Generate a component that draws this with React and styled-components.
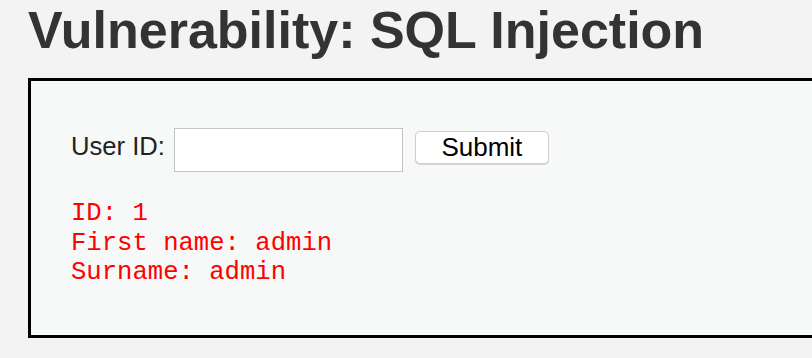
import React, { useState } from "react";
import styled, { createGlobalStyle } from "styled-components";

const GlobalStyle = createGlobalStyle`
  html, body {
    margin: 0;
    padding: 0;
    background-color: #f3f3f3;
    overflow: hidden;
  }
  body {
    font-family: "Liberation Sans", Arial, sans-serif;
  }
`;

function App() {
  const [userId, setUserId] = useState("");

  return (
    <>
      <GlobalStyle />
      <Page>
        <Title>Vulnerability: SQL Injection</Title>
        <VulnBox>
          <Form onSubmit={(e) => e.preventDefault()}>
            <Label htmlFor="uid">User ID:</Label>
            <TextInput
              id="uid"
              type="text"
              value={userId}
              onChange={(e) => setUserId(e.target.value)}
            />
            <SubmitButton type="submit">Submit</SubmitButton>
          </Form>
          <Result>
            {"ID: 1\nFirst name: admin\nSurname: admin"}
          </Result>
        </VulnBox>
      </Page>
    </>
  );
}

const Page = styled.div`
  padding-left: 28px;
  width: 100vw;
  box-sizing: border-box;
  overflow: hidden;
`;
const Title = styled.h1`
  margin: 0 0 18px 0;
  font-size: 52px;
  line-height: 60px;
  font-weight: bold;
  color: #333333;
  white-space: nowrap;
`;
const VulnBox = styled.div`
  margin-right: -20px;
  border: 3px solid #000;
  background-color: #f7f8f8;
  padding: 47px 40px;
  box-sizing: border-box;
  height: 260px;
`;
const Form = styled.form`
  display: flex;
  align-items: flex-start;
  height: 44px;
`;
const Label = styled.label`
  font-size: 25.6px;
  color: #222;
  margin: 4px 9px 0 0;
`;
const TextInput = styled.input`
  width: 229px;
  height: 44px;
  box-sizing: border-box;
  border: 1px solid #c3c3c3;
  background: #fff;
  outline: none;
  padding: 0 6px;
  font-size: 20px;
`;
const SubmitButton = styled.button`
  margin: 3px 0 0 12px;
  width: 134px;
  height: 33px;
  box-sizing: border-box;
  background: #fff;
  border: 1px solid #d0d0d0;
  border-radius: 5px;
  box-shadow: 0 1px 1px rgba(0, 0, 0, 0.15);
  font-family: "Liberation Sans", Arial, sans-serif;
  font-size: 26px;
  color: #000;
  padding: 0;
`;
const Result = styled.pre`
  margin: 27px 0 0 0;
  font-family: "Liberation Mono", "Courier New", monospace;
  font-size: 25.6px;
  line-height: 29.5px;
  color: #ff0000;
`;

export default App;
